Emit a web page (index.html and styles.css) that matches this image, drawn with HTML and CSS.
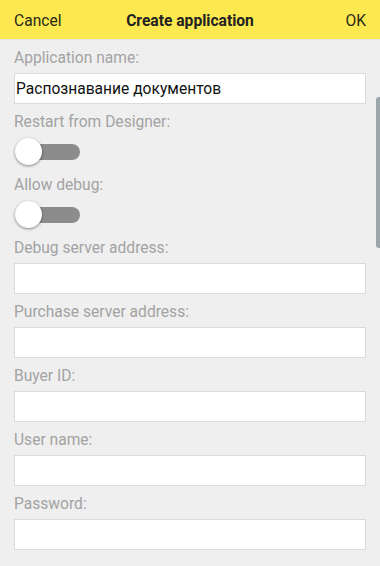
FILE: index.html
```html
<!DOCTYPE html>
<html lang="en">
<head>
    <meta charset="UTF-8">
    <meta name="viewport" content="width=device-width, initial-scale=1.0">
    <title>Create application</title>
    <link rel="stylesheet" href="styles.css">
</head>
<body>
    <header class="top-bar">
        <span class="bar-action">Cancel</span>
        <h1 class="bar-title">Create application</h1>
        <span class="bar-action bar-action-right">OK</span>
    </header>

    <div class="form">
        <label class="field-label">Application name:</label>
        <input class="field-input" type="text" value="Распознавание документов">

        <label class="field-label">Restart from Designer:</label>
        <div class="switch-row"><span class="switch"><span class="switch-thumb"></span></span></div>

        <label class="field-label">Allow debug:</label>
        <div class="switch-row"><span class="switch"><span class="switch-thumb"></span></span></div>

        <label class="field-label">Debug server address:</label>
        <input class="field-input" type="text">

        <label class="field-label">Purchase server address:</label>
        <input class="field-input" type="text">

        <label class="field-label">Buyer ID:</label>
        <input class="field-input" type="text">

        <label class="field-label">User name:</label>
        <input class="field-input" type="text">

        <label class="field-label">Password:</label>
        <input class="field-input" type="password">
    </div>

    <div class="scroll-thumb"></div>
</body>
</html>
```

FILE: styles.css
```css
/* Global */
body {
    margin: 0;
    background-color: #efefef;
    font-family: Roboto, "Noto Sans", sans-serif;
    color: #222;
    height: 566px;
    overflow: hidden;
    position: relative;
}

/* Yellow top bar */
.top-bar {
    height: 37px;
    padding: 2px 14px 0;
    background-color: #fce84f;
    border-bottom: 1px solid #e6e6e6;
    display: grid;
    grid-template-columns: 1fr auto 1fr;
    align-items: center;
}

.bar-action {
    font-size: 15.6px;
    color: #2a2a1a;
}

.bar-action-right {
    text-align: right;
}

.bar-title {
    margin: 0;
    font-size: 15.6px;
    font-weight: bold;
    color: #222;
}

/* Form */
.form {
    display: flex;
    flex-direction: column;
    padding: 0 14px;
}

.field-label {
    height: 33px;
    line-height: 18px;
    padding-top: 9px;
    box-sizing: border-box;
    font-size: 15.6px;
    color: #a3a3a3;
}

.field-input {
    height: 31px;
    box-sizing: border-box;
    margin: 0;
    border: 1px solid #dcdcdc;
    background-color: #fff;
    padding: 0 1px;
    font-family: Roboto, "Noto Sans", sans-serif;
    font-size: 15.6px;
    color: #111;
    outline: none;
}

/* Switches */
.switch-row {
    height: 30px;
    display: flex;
    align-items: center;
    padding-left: 2px;
}

.switch {
    position: relative;
    width: 64px;
    height: 16px;
    border-radius: 8px;
    background-color: #8c8c8c;
}

.switch-thumb {
    position: absolute;
    left: -1px;
    top: -6px;
    width: 27px;
    height: 27px;
    border-radius: 50%;
    background-color: #fff;
    box-shadow: 0 1px 3px rgba(0, 0, 0, 0.45);
}

/* Scroll indicator */
.scroll-thumb {
    position: absolute;
    right: 0;
    top: 97px;
    width: 4px;
    height: 151px;
    border-radius: 3px 0 0 3px;
    background-color: #9ba6ab;
}
```
